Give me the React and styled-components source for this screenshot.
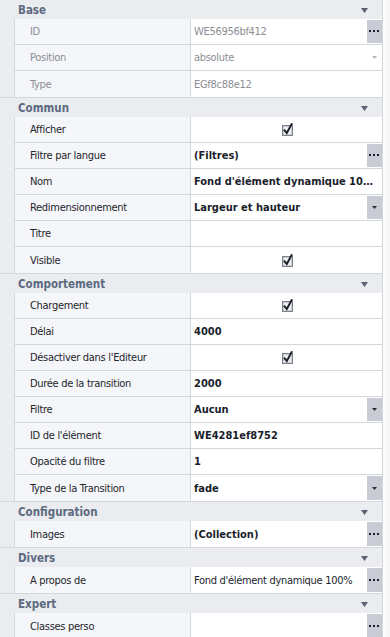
import React from 'react'
import styled, { createGlobalStyle } from 'styled-components'

const GlobalStyle = createGlobalStyle`
  html, body {
    margin: 0;
    padding: 0;
    background: #f4f5f7;
    overflow: hidden;
  }
  body {
    font-family: "DejaVu Sans Condensed", Tahoma, "DejaVu Sans", sans-serif;
    font-size: 11px;
  }
`

const sections = [
  {
    title: 'Base',
    rows: [
      { label: 'ID', value: 'WE56956bf412', disabled: true, button: 'dots' },
      { label: 'Position', value: 'absolute', disabled: true, button: 'ghost' },
      { label: 'Type', value: 'EGf8c88e12', disabled: true },
    ],
  },
  {
    title: 'Commun',
    rows: [
      { label: 'Afficher', check: true },
      { label: 'Filtre par langue', value: '(Filtres)', bold: true, button: 'dots' },
      { label: 'Nom', value: "Fond d'élément dynamique 100%", bold: true },
      { label: 'Redimensionnement', value: 'Largeur et hauteur', bold: true, button: 'arrow' },
      { label: 'Titre', value: '' },
      { label: 'Visible', check: true },
    ],
  },
  {
    title: 'Comportement',
    rows: [
      { label: 'Chargement', check: true },
      { label: 'Délai', value: '4000', bold: true },
      { label: "Désactiver dans l'Editeur", check: true },
      { label: 'Durée de la transition', value: '2000', bold: true },
      { label: 'Filtre', value: 'Aucun', bold: true, button: 'arrow' },
      { label: "ID de l'élément", value: 'WE4281ef8752', bold: true },
      { label: 'Opacité du filtre', value: '1', bold: true },
      { label: 'Type de la Transition', value: 'fade', bold: true, button: 'arrow' },
    ],
  },
  {
    title: 'Configuration',
    rows: [{ label: 'Images', value: '(Collection)', bold: true, button: 'dots' }],
  },
  {
    title: 'Divers',
    rows: [{ label: 'A propos de', value: "Fond d'élément dynamique 100%", button: 'dots' }],
  },
  {
    title: 'Expert',
    rows: [{ label: 'Classes perso', value: '', button: 'dots' }],
  },
]

const Caret = ({ color = '#5b6170', w = 7, h = 5 }) => (
  <svg width={w} height={h} viewBox={`0 0 ${w} ${h}`}>
    <polygon points={`0,0 ${w},0 ${w / 2},${h}`} fill={color} />
  </svg>
)

const Dots = () => (
  <svg width="11" height="3" viewBox="0 0 11 3">
    <rect x="0" y="0" width="2" height="2" fill="#1c1f2a" />
    <rect x="4" y="0" width="2" height="2" fill="#1c1f2a" />
    <rect x="8" y="0" width="2" height="2" fill="#1c1f2a" />
  </svg>
)

const CheckBox = () => (
  <svg width="12" height="13" viewBox="0 0 12 13">
    <rect x="0.5" y="2.5" width="10" height="10" fill="#eef0f3" stroke="#7e8189" />
    <rect x="1.5" y="3.5" width="8" height="8" fill="none" stroke="#c9ccd2" />
    <path d="M2.6 7.4 L4.8 9.9 L9.6 1.2" fill="none" stroke="#1f2128" strokeWidth="2" strokeLinecap="square" />
  </svg>
)

const RowButton = ({ type }) => {
  if (type === 'ghost') {
    return (
      <Ghost>
        <Caret color="#b5b8bf" w={5} h={3} />
      </Ghost>
    )
  }
  return <EditButton>{type === 'dots' ? <Dots /> : <Caret color="#2a2d36" w={5} h={3} />}</EditButton>
}

const App = () => {
  return (
    <>
      <GlobalStyle />
      <Frame>
        <Grid>
          {sections.map((section) => (
            <Section key={section.title}>
              <Header>
                <span>{section.title}</span>
                <Caret />
              </Header>
              {section.rows.map((row) => (
                <Row key={row.label}>
                  <Indent />
                  <Label $disabled={row.disabled}>{row.label}</Label>
                  <Value
                    $disabled={row.disabled}
                    $bold={row.bold}
                    $center={row.check}
                    $padded={!row.button && !row.check}
                  >
                    {row.check ? <CheckBox /> : <Text>{row.value}</Text>}
                    {row.button && <RowButton type={row.button} />}
                  </Value>
                </Row>
              ))}
            </Section>
          ))}
        </Grid>
        <Track />
      </Frame>
    </>
  )
}

export default App

const Frame = styled.div`
  display: flex;
  width: 390px;
  height: 637px;
  overflow: hidden;
`

const Grid = styled.div`
  width: 383px;
  flex: none;
  border-right: 1px solid #d3d6dc;
  box-sizing: border-box;
  background: #eaecf0;
`

const Track = styled.div`
  flex: 1;
  background: #f6f7f9;
  border-left: 2px solid #fbfbfc;
  box-shadow: inset 1px 0 0 #fff;
`

const Section = styled.div`
  border-bottom: 1px solid #d3d6dc;
`

const Header = styled.div`
  height: 19px;
  display: flex;
  align-items: center;
  justify-content: space-between;
  padding: 0 14px 0 18px;
  font-weight: bold;
  font-size: 11.5px;
  color: #5c6a80;
  background: #eaecf0;

  svg {
    margin-top: 1px;
  }
`

const Row = styled.div`
  display: grid;
  grid-template-columns: 15px 176px 1fr;
  height: 26px;

  &:not(:last-child) > *:not(:first-child) {
    border-bottom: 1px solid #d3d6dc;
  }
  &:first-of-type > *:not(:first-child) {
    border-top: 1px solid #d3d6dc;
  }
`

const Indent = styled.div`
  background: #eaecf0;
  border-right: 1px solid #d3d6dc;
`

const Label = styled.div`
  display: flex;
  align-items: center;
  padding-left: 15px;
  background: #f5f6f9;
  letter-spacing: -0.3px;
  color: ${(p) => (p.$disabled ? '#8c8e94' : '#23252b')};
  border-right: 1px solid #d3d6dc;
  white-space: nowrap;
  overflow: hidden;
`

const Value = styled.div`
  display: flex;
  align-items: center;
  justify-content: ${(p) => (p.$center ? 'center' : 'flex-start')};
  padding-left: 3px;
  padding-right: ${(p) => (p.$padded ? '5px' : '0')};
  background: #fff;
  min-width: 0;
  color: ${(p) => (p.$disabled ? '#8c8e94' : '#1a1d2b')};
  font-weight: ${(p) => (p.$bold ? 'bold' : 'normal')};
  letter-spacing: ${(p) => (p.$bold ? '0' : '-0.3px')};
  box-sizing: border-box;
`

const Text = styled.span`
  flex: 1;
  min-width: 0;
  white-space: nowrap;
  overflow: hidden;
  text-overflow: ellipsis;
`

const EditButton = styled.div`
  flex: none;
  width: 15px;
  align-self: stretch;
  margin: 1px 0;
  display: flex;
  align-items: center;
  justify-content: center;
  background: #c9ccd4;
`

const Ghost = styled(EditButton)`
  background: transparent;
`
